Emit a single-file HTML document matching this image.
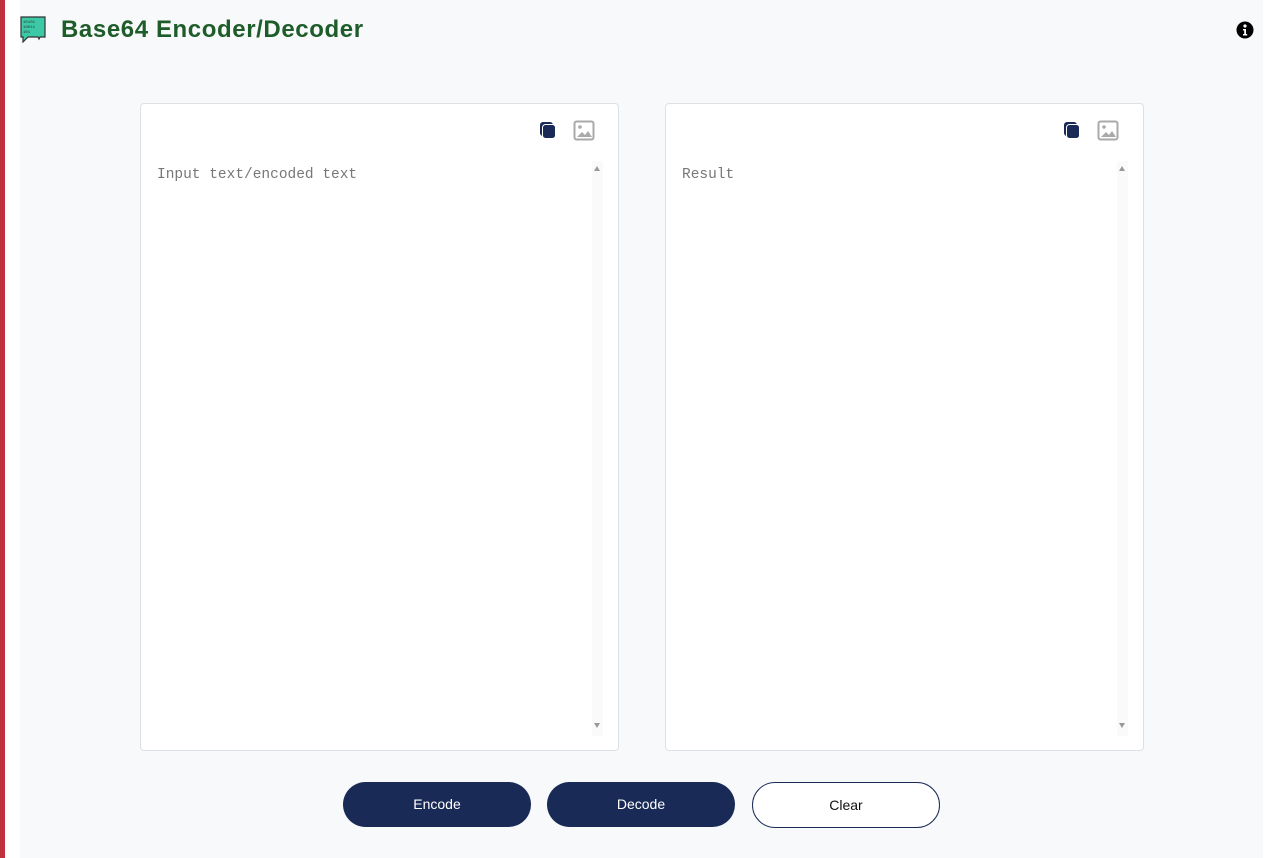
<!DOCTYPE html>
<html><head><style>
body{margin:0;width:1274px;height:858px;background:#fff;position:relative;overflow:hidden;font-family:"Liberation Sans",sans-serif}
.red{position:absolute;left:0;top:0;width:5px;height:858px;background:#c0303a}
.bg{position:absolute;left:20px;top:0;width:1243px;height:858px;background:#f8f9fb}
h1{position:absolute;left:61px;top:16px;margin:0;font-size:24px;letter-spacing:0.6px;font-weight:bold;color:#1e5c2a}
.panel{position:absolute;top:103px;width:477px;height:646px;background:#fff;border:1px solid #dde0e4;border-radius:4px}
.ph{position:absolute;left:16px;top:63px;font-family:"Liberation Mono",monospace;font-size:14.5px;color:#777}
.track{position:absolute;left:451px;top:57px;width:11px;height:575px;background:#fafafa}
.up,.dn{position:absolute;left:453px;width:0;height:0;border-left:3.5px solid transparent;border-right:3.5px solid transparent}
.up{top:62px;border-bottom:5px solid #999}
.dn{top:619px;border-top:5px solid #999}
.btn{position:absolute;top:782px;width:188px;height:45px;border-radius:23px;background:#1a2a57;color:#fff;font-size:14px;text-align:center;line-height:45px;box-sizing:border-box}
</style></head><body>
<div class="red"></div><div class="bg"></div>
<svg style="position:absolute;left:20px;top:16px" width="26" height="27" viewBox="0 0 26 27"><path d="M1 1h24v20h-5l-1 2-1-2H8l-5 5v-5H1z" fill="#3cc9a6" stroke="#333" stroke-width="1.2"/><g fill="#333" font-size="4" font-family="Liberation Mono"><text x="3" y="7">10101</text><text x="3" y="12">10011</text><text x="3" y="17">101</text></g></svg>
<h1>Base64 Encoder/Decoder</h1>
<svg style="position:absolute;left:1236px;top:21px" width="18" height="18" viewBox="0 0 18 18"><circle cx="9" cy="9" r="8.5" fill="#000"/><circle cx="9" cy="5" r="1.6" fill="#fff"/><path d="M7 8h3v5h1.2v1.5H7V13h1.2v-3.5H7z" fill="#fff"/></svg>
<div class="panel" style="left:140px">
 <svg style="position:absolute;left:398px;top:17px" width="18" height="18" viewBox="0 0 18 18"><rect x="1" y="1" width="13" height="14" rx="3" fill="#1a2a57"/><rect x="3.5" y="3.5" width="13" height="14" rx="3" fill="#1a2a57" stroke="#fff" stroke-width="1"/></svg>
 <svg style="position:absolute;left:432px;top:16px" width="22" height="21" viewBox="0 0 22 21"><rect x="1.5" y="1.5" width="19" height="18" rx="2" fill="none" stroke="#aaa" stroke-width="2"/><circle cx="7" cy="7" r="1.8" fill="#aaa"/><path d="M4 17l5-5 3 3 3-4 4 6z" fill="#aaa"/></svg>
 <div class="ph">Input text/encoded text</div><div class="track"></div><div class="up"></div><div class="dn"></div>
</div>
<div class="panel" style="left:665px">
 <svg style="position:absolute;left:397px;top:17px" width="18" height="18" viewBox="0 0 18 18"><rect x="1" y="1" width="13" height="14" rx="3" fill="#1a2a57"/><rect x="3.5" y="3.5" width="13" height="14" rx="3" fill="#1a2a57" stroke="#fff" stroke-width="1"/></svg>
 <svg style="position:absolute;left:431px;top:16px" width="22" height="21" viewBox="0 0 22 21"><rect x="1.5" y="1.5" width="19" height="18" rx="2" fill="none" stroke="#aaa" stroke-width="2"/><circle cx="7" cy="7" r="1.8" fill="#aaa"/><path d="M4 17l5-5 3 3 3-4 4 6z" fill="#aaa"/></svg>
 <div class="ph">Result</div><div class="track"></div><div class="up"></div><div class="dn"></div>
</div>
<div class="btn" style="left:343px">Encode</div>
<div class="btn" style="left:547px">Decode</div>
<div class="btn" style="left:752px;background:#fff;color:#111;border:1px solid #1a2a57;height:46px;line-height:44px">Clear</div>
</body></html>
